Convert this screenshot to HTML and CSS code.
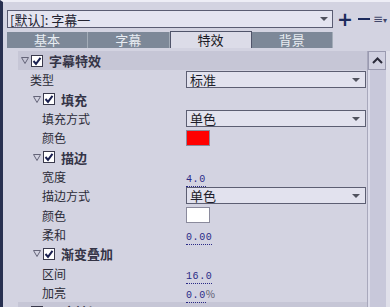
FILE: index.html
```html
<!DOCTYPE html>
<html>
  <head>
    <title>字幕特效</title>
    <link rel="stylesheet" href="styles.css">
  </head>

  <body>
    <div class="window">
      <div class="topbar">
        <div class="preset">
          <span>[默认]: 字幕一</span>
          <span class="arrow"></span>
        </div>
        <span class="tool plus">+</span>
        <span class="tool minus"></span>
        <span class="tool menu">≡<small>▾</small></span>
      </div>

      <div class="tabs">
        <div class="tab">基本</div>
        <div class="tab">字幕</div>
        <div class="tab active">特效</div>
        <div class="tab">背景</div>
      </div>

      <div class="main">
        <div class="content">
          <div class="row head">
            <div class="title lv0">
              <svg class="twisty" width="8" height="7"><polygon points="0.5,0.5 7.5,0.5 4,6.5" /></svg>
              <svg class="check" width="12" height="12"><rect x="0.5" y="0.5" width="11" height="11" /><path d="M2.5 6 L5 8.8 L9.5 2.8" /></svg>
              字幕特效
            </div>
          </div>
          <div class="row">
            <div class="label lv1">类型</div>
            <div class="select">标准<span class="arrow"></span></div>
          </div>

          <div class="row">
            <div class="title lv1h">
              <svg class="twisty" width="8" height="7"><polygon points="0.5,0.5 7.5,0.5 4,6.5" /></svg>
              <svg class="check" width="12" height="12"><rect x="0.5" y="0.5" width="11" height="11" /><path d="M2.5 6 L5 8.8 L9.5 2.8" /></svg>
              填充
            </div>
          </div>
          <div class="row">
            <div class="label lv2">填充方式</div>
            <div class="select">单色<span class="arrow"></span></div>
          </div>
          <div class="row">
            <div class="label lv2">颜色</div>
            <div><span class="swatch red"></span></div>
          </div>

          <div class="row">
            <div class="title lv1h">
              <svg class="twisty" width="8" height="7"><polygon points="0.5,0.5 7.5,0.5 4,6.5" /></svg>
              <svg class="check" width="12" height="12"><rect x="0.5" y="0.5" width="11" height="11" /><path d="M2.5 6 L5 8.8 L9.5 2.8" /></svg>
              描边
            </div>
          </div>
          <div class="row">
            <div class="label lv2">宽度</div>
            <div><span class="value">4.0</span></div>
          </div>
          <div class="row">
            <div class="label lv2">描边方式</div>
            <div class="select">单色<span class="arrow"></span></div>
          </div>
          <div class="row">
            <div class="label lv2">颜色</div>
            <div><span class="swatch white"></span></div>
          </div>
          <div class="row">
            <div class="label lv2">柔和</div>
            <div><span class="value">0.00</span></div>
          </div>

          <div class="row">
            <div class="title lv1h">
              <svg class="twisty" width="8" height="7"><polygon points="0.5,0.5 7.5,0.5 4,6.5" /></svg>
              <svg class="check" width="12" height="12"><rect x="0.5" y="0.5" width="11" height="11" /><path d="M2.5 6 L5 8.8 L9.5 2.8" /></svg>
              渐变叠加
            </div>
          </div>
          <div class="row">
            <div class="label lv2">区间</div>
            <div><span class="value">16.0</span></div>
          </div>
          <div class="row">
            <div class="label lv2">加亮</div>
            <div><span class="value">0.0</span><span class="unit">%</span></div>
          </div>

          <div class="row head">
            <div class="title lv0">
              <svg class="twisty" width="8" height="7"><polygon points="0.5,0.5 7.5,0.5 4,6.5" /></svg>
              <svg class="check" width="12" height="12"><rect x="0.5" y="0.5" width="11" height="11" /></svg>
              以度转切
            </div>
          </div>
        </div>

        <div class="scrollbar">
          <div class="up">
            <svg width="11" height="7"><path d="M1 6 L5.5 1.5 L10 6" /></svg>
          </div>
          <div class="track"></div>
        </div>
        <div class="edge"></div>
      </div>
    </div>
  </body>
</html>
```

FILE: styles.css
```css
body {
  margin: 0;
  background-color: #d3d3e1;
  font-family: "Noto Sans CJK SC", "Noto Sans", sans-serif;
  font-size: 12px;
  color: #2c2c38;
  overflow: hidden;
}

.window {
  height: 307px;
  border-left: 3px solid #283050;
  border-top: 2px solid #eeeef6;
  box-sizing: border-box;
  display: flex;
  flex-direction: column;
}

/* preset line */

.topbar {
  display: flex;
  align-items: center;
  height: 18px;
  margin: 8px 0 0 4px;
}

.preset {
  width: 326px;
  height: 18px;
  box-sizing: border-box;
  border: 1px solid #5a5c72;
  background-color: #e4e4f0;
  display: flex;
  align-items: center;
  justify-content: space-between;
  padding: 0 4px 0 2px;
  font-size: 13px;
  color: #222230;
}

.arrow {
  width: 0;
  height: 0;
  border-left: 4px solid transparent;
  border-right: 4px solid transparent;
  border-top: 4px solid #50525e;
}

.tool {
  color: #1c2a5c;
  font-weight: bold;
}

.plus {
  font-size: 19px;
  line-height: 18px;
  margin-left: 4px;
  font-family: "DejaVu Sans", sans-serif;
}

.minus {
  width: 12px;
  height: 2px;
  background-color: #1c2a5c;
  margin-left: 5px;
}

.menu {
  font-size: 12px;
  font-weight: normal;
  color: #40466a;
  margin-left: 3px;
  font-family: "DejaVu Sans", sans-serif;
}

.menu small {
  font-size: 8px;
}

/* tabs */

.tabs {
  display: flex;
  width: 326px;
  height: 16px;
  margin: 4px 0 0 4px;
}

.tab {
  flex: 1;
  background-color: #7d8898;
  color: #e8ecf2;
  font-size: 13px;
  line-height: 16px;
  text-align: center;
  border-right: 1px solid #a3acb8;
}

.tab.active {
  background-color: #dcdce8;
  color: #1a1a24;
  border-left: 1px solid #50546a;
  border-right: 1px solid #50546a;
  border-top: 1px solid #50546a;
  margin-top: -1px;
}

/* property list */

.main {
  flex: 1;
  display: flex;
  margin-top: 3px;
  overflow: hidden;
}

.content {
  width: 350px;
  margin-left: 15px;
}

.row {
  display: grid;
  grid-template-columns: 168px 180px;
  align-items: center;
  height: 19.33px;
}

.row.head {
  background-color: #c6c6d6;
  grid-template-columns: 1fr;
}

.label {
  color: #2c2c38;
}

.lv1 {
  padding-left: 12px;
}

.lv2 {
  padding-left: 24px;
}

.title {
  display: flex;
  align-items: center;
  font-weight: bold;
  font-size: 13px;
  color: #343446;
}

.lv0 {
  padding-left: 3px;
}

.lv1h {
  padding-left: 15px;
}

.twisty {
  margin-right: 2px;
}

.twisty polygon {
  fill: none;
  stroke: #646478;
}

.check {
  margin-right: 6px;
}

.check rect {
  fill: #ffffff;
  stroke: #3a3a4c;
}

.check path {
  fill: none;
  stroke: #1a2050;
  stroke-width: 2;
}

.select {
  height: 17px;
  box-sizing: border-box;
  border: 1px solid #5c5e72;
  background-color: #e2e2ee;
  display: flex;
  align-items: center;
  justify-content: space-between;
  padding: 0 5px 0 3px;
  font-size: 13px;
  color: #1e1e2a;
}

.swatch {
  display: block;
  width: 24px;
  height: 16px;
  box-sizing: border-box;
  border: 1px solid #8a8a9c;
}

.swatch.red {
  background-color: #ff0000;
}

.swatch.white {
  background-color: #ffffff;
}

.value {
  font-family: "Liberation Mono", monospace;
  font-size: 10px;
  letter-spacing: 0.6px;
  color: #2a2a86;
  border-bottom: 1px dotted #2a2a86;
  padding-bottom: 1px;
}

.unit {
  font-size: 10px;
  color: #5a5a70;
}

/* scrollbar */

.scrollbar {
  width: 18px;
  display: flex;
  flex-direction: column;
  background-color: #c8c8da;
  border-left: 1px solid #a8a8bc;
}

.up {
  height: 17px;
  border: 1px solid #9a9ab0;
  background-color: #d0d0e0;
  display: flex;
  align-items: center;
  justify-content: center;
}

.up path {
  fill: none;
  stroke: #2a2a3a;
  stroke-width: 2;
}

.track {
  flex: 1;
  border-left: 2px solid #dcdcea;
}

.edge {
  width: 4px;
  background-color: #e0e0ea;
}
```
